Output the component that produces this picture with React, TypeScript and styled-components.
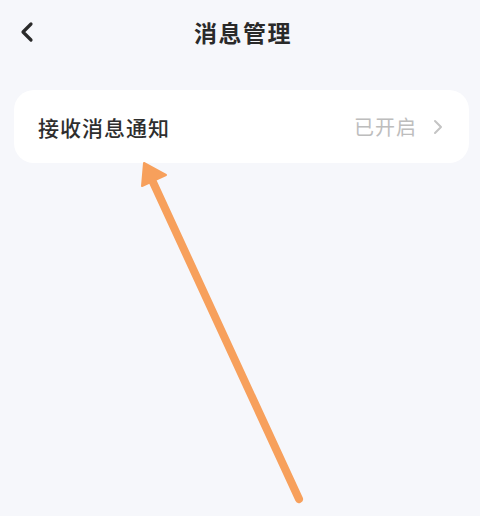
import React from "react";
import styled, { createGlobalStyle } from "styled-components";

const Global = createGlobalStyle`
  html, body { margin: 0; padding: 0; background: #f6f7fb; }
  body { font-family: "Noto Sans CJK SC", "Noto Sans", sans-serif; }
`;

const Page = styled.div`
  position: relative;
  width: 480px;
  height: 516px;
  background: #f6f7fb;
  overflow: hidden;
`;

const NavBar = styled.div`
  height: 64px;
  display: grid;
  grid-template-columns: 60px 1fr 60px;
  align-items: center;
`;

const BackButton = styled.div`
  display: flex;
  align-items: center;
  padding-left: 18px;
  height: 100%;
`;

const Title = styled.h1`
  margin: 0;
  text-align: center;
  font-size: 23px;
  font-weight: 700;
  color: #2a2a2a;
  letter-spacing: 1.5px;
  transform: translateX(3px);
`;

const Content = styled.div`
  padding: 26px 11px 0 14px;
`;

const Card = styled.div`
  background: #fff;
  border-radius: 20px;
  height: 73px;
  display: flex;
  align-items: center;
  justify-content: space-between;
  padding: 0 26px 0 24px;
`;

const Label = styled.span`
  font-size: 21px;
  font-weight: 500;
  color: #2e2e2e;
  letter-spacing: 1px;
`;

const Right = styled.div`
  display: flex;
  align-items: center;
  gap: 16px;
`;

const Status = styled.span`
  font-size: 20px;
  color: #bdbdbd;
  letter-spacing: 1px;
`;

const Arrow = styled.svg`
  position: absolute;
  left: 0;
  top: 0;
  pointer-events: none;
`;

export default function App() {
  return (
    <Page>
      <Global />
      <NavBar>
        <BackButton>
          <svg width="18" height="22" viewBox="0 0 18 22">
            <path d="M13 3 L5 11 L13 19" fill="none" stroke="#2a2a2a" strokeWidth="3.2" strokeLinecap="round" strokeLinejoin="round" />
          </svg>
        </BackButton>
        <Title>消息管理</Title>
        <div />
      </NavBar>
      <Content>
        <Card>
          <Label>接收消息通知</Label>
          <Right>
            <Status>已开启</Status>
            <svg width="10" height="16" viewBox="0 0 10 16">
              <path d="M2 2 L8 8 L2 14" fill="none" stroke="#c4c4c4" strokeWidth="2" strokeLinecap="round" strokeLinejoin="round" />
            </svg>
          </Right>
        </Card>
      </Content>
      <Arrow width="480" height="516" viewBox="0 0 480 516">
        <line x1="299" y1="499" x2="152" y2="180" stroke="#f7a05c" strokeWidth="8" strokeLinecap="round" />
        <polygon points="144,163 142,186 166,175" fill="#f7a05c" stroke="#f7a05c" strokeWidth="2" strokeLinejoin="round" />
      </Arrow>
    </Page>
  );
}
